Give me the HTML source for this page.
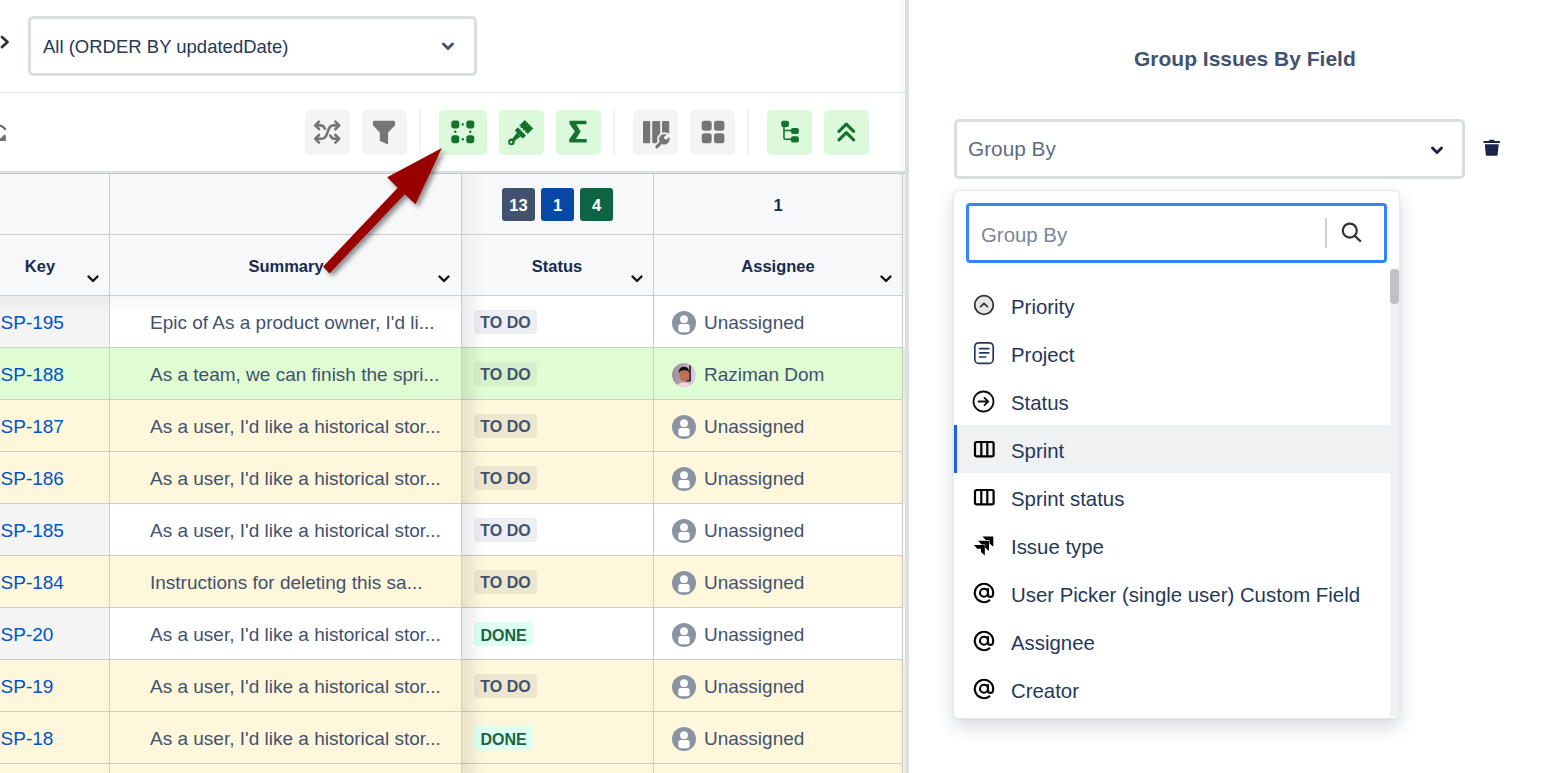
<!DOCTYPE html>
<html><head><meta charset="utf-8"><style>
html,body{margin:0;padding:0;}
body{width:1543px;height:773px;overflow:hidden;position:relative;background:#fff;font-family:"Liberation Sans", sans-serif;}
.a{position:absolute;}
.t{position:absolute;white-space:nowrap;}
.btn{position:absolute;top:110px;height:45px;border-radius:5px;}
.btn svg{position:absolute;}
</style></head><body>

<svg class="a" style="left:0;top:34px" width="12" height="16" viewBox="0 0 12 16"><path d="M2 3 L7.5 8 L2 13" fill="none" stroke="#333" stroke-width="2.8" stroke-linecap="round" stroke-linejoin="round"/></svg>
<div class="a" style="left:28px;top:16px;width:443px;height:54px;border:3px solid #dadde2;border-radius:5px;"></div>
<div class="t" style="left:43px;top:38px;font-size:18.5px;line-height:18.5px;color:#253858;">All (ORDER BY updatedDate)</div>
<svg class="a" style="left:440px;top:40px" width="16" height="13" viewBox="0 0 16 13"><path d="M3.5 4 L8 8.5 L12.5 4" fill="none" stroke="#42526e" stroke-width="3" stroke-linecap="round" stroke-linejoin="round"/></svg>
<div class="a" style="left:0;top:92px;width:905px;height:1px;background:#e4e6ea;"></div>
<svg class="a" style="left:-14px;top:120px" width="22" height="24" viewBox="0 0 22 24"><path d="M4 10 A 9 9 0 0 1 19 9" fill="none" stroke="#6b6b6b" stroke-width="2.2" stroke-linecap="round"/><path d="M19.8 16 V 21 H 13 Z" fill="#6b6b6b"/><path d="M19 15 A 9 9 0 0 1 10 20" fill="none" stroke="#6b6b6b" stroke-width="2.2"/></svg>
<div class="btn" style="left:305px;width:45px;background:#f4f4f4;"><svg style="left:8px;top:10px" width="30" height="26" viewBox="0 0 30 26"><g fill="none" stroke="#757575" stroke-width="2.6" stroke-linecap="round" stroke-linejoin="round">
<path d="M25.5 5.4 H20.5 C17 5.4 15.6 8 14.6 12 C13.6 16 12.2 18.8 8.6 18.8 H3"/>
<path d="M22.3 1.6 L26.2 5.4 L22.3 9.2"/>
<path d="M6 15 L2.2 18.8 L6 22.6"/>
<path d="M3 5.4 H7.6 C9.9 5.4 11 6.6 11.8 8.7"/>
<path d="M6 1.6 L2.2 5.4 L6 9.2"/>
<path d="M17.3 15.5 C18.1 17.6 19.3 18.8 21.6 18.8 H25.5"/>
<path d="M22.3 15 L26.2 18.8 L22.3 22.6"/>
</g></svg></div>
<div class="btn" style="left:362px;width:45px;background:#f4f4f4;"><svg style="left:10px;top:10px" width="25" height="26" viewBox="0 0 25 26"><path d="M0.5 1.5 Q0.5 0.5 1.8 0.5 H21.2 Q22.5 0.5 22.5 1.8 V5 L15.6 12.2 V23 Q15.6 24.3 14.3 23.7 L7.3 20.4 V12.2 L0.5 5 Z" fill="#757575" transform="translate(0.5 0.3)"/></svg></div>
<div class="a" style="left:419px;top:110px;width:2px;height:45px;background:#f0f1f2;"></div>
<div class="btn" style="left:439px;width:48px;background:#dcf9dc;"><svg style="left:12px;top:10px" width="24" height="24" viewBox="0 0 24 24"><g fill="#16732f">
<rect x="0.3" y="0.4" width="8" height="8" rx="2.6"/><rect x="15.3" y="0.4" width="8" height="8" rx="2.6"/>
<rect x="0.3" y="15.2" width="8" height="8" rx="2.6"/><rect x="15.3" y="15.2" width="8" height="8" rx="2.6"/>
<circle cx="11.8" cy="4.4" r="1.2"/><circle cx="11.8" cy="19.2" r="1.2"/><circle cx="4.3" cy="11.8" r="1.2"/><circle cx="19.3" cy="11.8" r="1.2"/>
</g></svg></div>
<div class="btn" style="left:499px;width:45px;background:#dcf9dc;"><svg style="left:0;top:0" width="45" height="45" viewBox="0 0 45 45"><g fill="#16732f" transform="translate(30 14.3) rotate(45)">
<path d="M-6 0 H6 V8.6 L4.6 7 L3.2 8.8 L1.6 6.8 L0 8.9 L-1.6 6.9 L-3.2 8.8 L-4.6 7 L-6 8.6 Z"/>
<path d="M-5.8 10 H5.8 V13.4 Q5.8 14.6 4.6 14.6 H-4.6 Q-5.8 14.6 -5.8 13.4 Z"/>
<path d="M-2.6 14.6 H2.6 L1.6 21.5 Q1.6 22.2 2.4 22.6 A3.3 3.3 0 1 1 -2.4 22.6 Q-1.6 22.2 -1.6 21.5 Z"/>
<circle cx="0" cy="25.2" r="1.1" fill="#dcf9dc"/>
</g></svg></div>
<div class="btn" style="left:556px;width:45px;background:#dcf9dc;"><svg style="left:13px;top:10px" width="20" height="25" viewBox="0 0 20 25"><path d="M0.6 0.8 H17.4 V4.3 H7.2 L11.6 11.5 L7 18.9 H17.7 V22.5 H0.2 V19.3 L5.8 11.5 L0.6 4 Z" fill="#16732f"/></svg></div>
<div class="a" style="left:613px;top:110px;width:2px;height:45px;background:#f0f1f2;"></div>
<div class="btn" style="left:633px;width:45px;background:#f4f4f4;"><svg style="left:0;top:0" width="45" height="45" viewBox="0 0 45 45"><g fill="#757575">
<rect x="10" y="11" width="7.2" height="22.3" rx="1.2"/>
<rect x="19.2" y="11" width="8" height="22.3" rx="1.2"/>
<rect x="29" y="11" width="7.2" height="22.3" rx="1.2"/>
</g>
<g stroke="#f4f4f4" fill="#f4f4f4" stroke-width="3" stroke-linecap="round">
<circle cx="31.3" cy="29.3" r="5.6"/><path d="M28 32.6 L23.6 37" stroke-width="6.2"/>
</g>
<g fill="#757575">
<circle cx="31.3" cy="29.3" r="5.3"/>
</g>
<path d="M28 32.6 L23.8 36.8" stroke="#757575" stroke-width="3.1" stroke-linecap="round"/>
<circle cx="33" cy="27.6" r="1.9" fill="#f4f4f4"/>
<path d="M33 27.6 L36.5 24.1" stroke="#f4f4f4" stroke-width="3.3"/>
</svg></div>
<div class="btn" style="left:690px;width:45px;background:#f4f4f4;"><svg style="left:11px;top:10px" width="24" height="24" viewBox="0 0 24 24"><g fill="#757575">
<rect x="0.7" y="0.8" width="10" height="10" rx="2.8"/><rect x="13" y="0.8" width="10.4" height="10" rx="2.8"/>
<rect x="0.7" y="13.2" width="10" height="10" rx="2.8"/><rect x="13" y="13.2" width="10.4" height="10" rx="2.8"/>
</g></svg></div>
<div class="a" style="left:747px;top:110px;width:2px;height:45px;background:#f0f1f2;"></div>
<div class="btn" style="left:767px;width:45px;background:#dcf9dc;"><svg style="left:13px;top:10px" width="20" height="24" viewBox="0 0 20 24"><g fill="#16732f">
<rect x="1.2" y="0.7" width="7.8" height="6.4" rx="2"/>
<rect x="10.9" y="7.9" width="8" height="6" rx="2"/>
<rect x="10.9" y="16.2" width="8" height="6.4" rx="2"/>
</g><g fill="none" stroke="#16732f" stroke-width="1.6">
<path d="M4 6.5 V18 Q4 19.2 5.2 19.2 H11.5"/><path d="M4 10.5 H11.5"/>
</g></svg></div>
<div class="btn" style="left:824px;width:45px;background:#dcf9dc;"><svg style="left:12px;top:12px" width="21" height="21" viewBox="0 0 21 21"><g fill="none" stroke="#16732f" stroke-width="3.2" stroke-linecap="round" stroke-linejoin="round">
<path d="M3 9.3 L10.3 2.2 L17.6 9.3"/><path d="M3 17.8 L10.3 10.7 L17.6 17.8"/>
</g></svg></div>
<div class="a" style="left:0;top:171px;width:905px;height:3px;background:#dcdfe4;"></div>
<div class="a" style="left:0;top:173px;width:903px;height:1px;background:#c9cacc;"></div>
<div class="a" style="left:0;top:174px;width:905px;height:121px;background:#f7f8fa;"></div>
<div class="a" style="left:0;top:234px;width:903px;height:1px;background:#cdcdcd;"></div>
<div class="a" style="left:0;top:295px;width:903px;height:1px;background:#cdcdcd;"></div>
<div class="a" style="left:502px;top:188px;width:33px;height:33px;border-radius:3px;background:#42526e;color:#fff;font-weight:bold;font-size:16.5px;line-height:35px;text-align:center;">13</div>
<div class="a" style="left:541px;top:188px;width:33px;height:33px;border-radius:3px;background:#0747a6;color:#fff;font-weight:bold;font-size:16.5px;line-height:35px;text-align:center;">1</div>
<div class="a" style="left:580px;top:188px;width:33px;height:33px;border-radius:3px;background:#0e6342;color:#fff;font-weight:bold;font-size:16.5px;line-height:35px;text-align:center;">4</div>
<div class="t" style="left:654px;width:248px;top:197px;font-size:16.5px;line-height:16.5px;font-weight:bold;text-align:center;color:#172b4d;">1</div>
<div class="t" style="left:-60px;width:200px;top:258px;font-size:16.5px;line-height:16.5px;font-weight:bold;text-align:center;color:#172b4d;">Key</div>
<div class="t" style="left:186px;width:200px;top:258px;font-size:16.5px;line-height:16.5px;font-weight:bold;text-align:center;color:#172b4d;">Summary</div>
<div class="t" style="left:457px;width:200px;top:258px;font-size:16.5px;line-height:16.5px;font-weight:bold;text-align:center;color:#172b4d;">Status</div>
<div class="t" style="left:678px;width:200px;top:258px;font-size:16.5px;line-height:16.5px;font-weight:bold;text-align:center;color:#172b4d;">Assignee</div>
<svg class="a" style="left:86px;top:273px" width="14" height="12" viewBox="0 0 14 12"><path d="M2.5 3.5 L7 8 L11.5 3.5" fill="none" stroke="#111" stroke-width="2.4" stroke-linecap="round" stroke-linejoin="round"/></svg>
<svg class="a" style="left:437px;top:273px" width="14" height="12" viewBox="0 0 14 12"><path d="M2.5 3.5 L7 8 L11.5 3.5" fill="none" stroke="#111" stroke-width="2.4" stroke-linecap="round" stroke-linejoin="round"/></svg>
<svg class="a" style="left:630px;top:273px" width="14" height="12" viewBox="0 0 14 12"><path d="M2.5 3.5 L7 8 L11.5 3.5" fill="none" stroke="#111" stroke-width="2.4" stroke-linecap="round" stroke-linejoin="round"/></svg>
<svg class="a" style="left:879px;top:273px" width="14" height="12" viewBox="0 0 14 12"><path d="M2.5 3.5 L7 8 L11.5 3.5" fill="none" stroke="#111" stroke-width="2.4" stroke-linecap="round" stroke-linejoin="round"/></svg>
<div class="a" style="left:0;top:296px;width:905px;height:51px;background:#ffffff;"></div>
<div class="a" style="left:0;top:296px;width:109px;height:51px;background:#f4f4f4;"></div>
<div class="a" style="left:0;top:347px;width:903px;height:1px;background:#cdcdcd;"></div>
<div class="t" style="left:-10px;top:313px;font-size:19px;line-height:19px;color:#0052cc;">LSP-195</div>
<div class="t" style="left:150px;top:313px;font-size:19px;line-height:19px;color:#42526e;">Epic of As a product owner, I'd li...</div>
<div class="a" style="left:474px;top:310px;width:63px;height:24px;border-radius:4px;background:#eceef1;"></div>
<div class="t" style="left:474px;width:63px;text-align:center;top:315px;font-size:16px;line-height:16px;font-weight:bold;color:#42526e;">TO DO</div>
<svg class="a" style="left:672px;top:311px" width="24" height="24" viewBox="0 0 24 24"><defs><clipPath id="c0"><circle cx="12" cy="12" r="12"/></clipPath></defs><circle cx="12" cy="12" r="12" fill="#8993a4"/><g clip-path="url(#c0)" fill="#fff"><circle cx="12" cy="8.2" r="3.9"/><rect x="6.3" y="13.1" width="11.4" height="8.1" rx="2.6"/></g></svg>
<div class="t" style="left:704px;top:313px;font-size:19px;line-height:19px;color:#42526e;">Unassigned</div>
<div class="a" style="left:0;top:348px;width:905px;height:51px;background:#dffcd2;"></div>
<div class="a" style="left:0;top:348px;width:109px;height:51px;background:#dffcd2;"></div>
<div class="a" style="left:0;top:399px;width:903px;height:1px;background:#cdcdcd;"></div>
<div class="t" style="left:-10px;top:365px;font-size:19px;line-height:19px;color:#0052cc;">LSP-188</div>
<div class="t" style="left:150px;top:365px;font-size:19px;line-height:19px;color:#42526e;">As a team, we can finish the spri...</div>
<div class="a" style="left:474px;top:362px;width:63px;height:24px;border-radius:4px;background:#d6f0cc;"></div>
<div class="t" style="left:474px;width:63px;text-align:center;top:367px;font-size:16px;line-height:16px;font-weight:bold;color:#42526e;">TO DO</div>
<svg class="a" style="left:672px;top:363px" width="24" height="24" viewBox="0 0 24 24"><defs><clipPath id="rz"><circle cx="12" cy="12" r="11.9"/></clipPath><linearGradient id="rzg" x1="0" y1="0" x2="1" y2="0"><stop offset="0" stop-color="#a08e9c"/><stop offset="0.55" stop-color="#b8a8b8"/><stop offset="1" stop-color="#dcd6e6"/></linearGradient></defs><g clip-path="url(#rz)"><rect width="24" height="24" fill="url(#rzg)"/><path d="M18 2.5 V17.5 H13" fill="none" stroke="#3a2824" stroke-width="1.8"/><ellipse cx="12.2" cy="12.6" rx="4.9" ry="6" fill="#bd7052"/><path d="M6.8 10.5 Q6.3 3.6 12 3.8 Q17.6 3.6 17.2 10.5 Q16.3 7 12.2 7.2 Q8 7 6.8 10.5 Z" fill="#171010"/><path d="M4.5 24 Q5.5 19.6 12 19.4 Q18.5 19.6 19.5 24 Z" fill="#eed4da"/></g></svg>
<div class="t" style="left:704px;top:365px;font-size:19px;line-height:19px;color:#42526e;">Raziman Dom</div>
<div class="a" style="left:0;top:400px;width:905px;height:51px;background:#fef7dc;"></div>
<div class="a" style="left:0;top:400px;width:109px;height:51px;background:#fef7dc;"></div>
<div class="a" style="left:0;top:451px;width:903px;height:1px;background:#cdcdcd;"></div>
<div class="t" style="left:-10px;top:417px;font-size:19px;line-height:19px;color:#0052cc;">LSP-187</div>
<div class="t" style="left:150px;top:417px;font-size:19px;line-height:19px;color:#42526e;">As a user, I'd like a historical stor...</div>
<div class="a" style="left:474px;top:414px;width:63px;height:24px;border-radius:4px;background:#ede7d0;"></div>
<div class="t" style="left:474px;width:63px;text-align:center;top:419px;font-size:16px;line-height:16px;font-weight:bold;color:#42526e;">TO DO</div>
<svg class="a" style="left:672px;top:415px" width="24" height="24" viewBox="0 0 24 24"><defs><clipPath id="c2"><circle cx="12" cy="12" r="12"/></clipPath></defs><circle cx="12" cy="12" r="12" fill="#8993a4"/><g clip-path="url(#c2)" fill="#fff"><circle cx="12" cy="8.2" r="3.9"/><rect x="6.3" y="13.1" width="11.4" height="8.1" rx="2.6"/></g></svg>
<div class="t" style="left:704px;top:417px;font-size:19px;line-height:19px;color:#42526e;">Unassigned</div>
<div class="a" style="left:0;top:452px;width:905px;height:51px;background:#fef7dc;"></div>
<div class="a" style="left:0;top:452px;width:109px;height:51px;background:#fef7dc;"></div>
<div class="a" style="left:0;top:503px;width:903px;height:1px;background:#cdcdcd;"></div>
<div class="t" style="left:-10px;top:469px;font-size:19px;line-height:19px;color:#0052cc;">LSP-186</div>
<div class="t" style="left:150px;top:469px;font-size:19px;line-height:19px;color:#42526e;">As a user, I'd like a historical stor...</div>
<div class="a" style="left:474px;top:466px;width:63px;height:24px;border-radius:4px;background:#ede7d0;"></div>
<div class="t" style="left:474px;width:63px;text-align:center;top:471px;font-size:16px;line-height:16px;font-weight:bold;color:#42526e;">TO DO</div>
<svg class="a" style="left:672px;top:467px" width="24" height="24" viewBox="0 0 24 24"><defs><clipPath id="c3"><circle cx="12" cy="12" r="12"/></clipPath></defs><circle cx="12" cy="12" r="12" fill="#8993a4"/><g clip-path="url(#c3)" fill="#fff"><circle cx="12" cy="8.2" r="3.9"/><rect x="6.3" y="13.1" width="11.4" height="8.1" rx="2.6"/></g></svg>
<div class="t" style="left:704px;top:469px;font-size:19px;line-height:19px;color:#42526e;">Unassigned</div>
<div class="a" style="left:0;top:504px;width:905px;height:51px;background:#ffffff;"></div>
<div class="a" style="left:0;top:504px;width:109px;height:51px;background:#f4f4f4;"></div>
<div class="a" style="left:0;top:555px;width:903px;height:1px;background:#cdcdcd;"></div>
<div class="t" style="left:-10px;top:521px;font-size:19px;line-height:19px;color:#0052cc;">LSP-185</div>
<div class="t" style="left:150px;top:521px;font-size:19px;line-height:19px;color:#42526e;">As a user, I'd like a historical stor...</div>
<div class="a" style="left:474px;top:518px;width:63px;height:24px;border-radius:4px;background:#eceef1;"></div>
<div class="t" style="left:474px;width:63px;text-align:center;top:523px;font-size:16px;line-height:16px;font-weight:bold;color:#42526e;">TO DO</div>
<svg class="a" style="left:672px;top:519px" width="24" height="24" viewBox="0 0 24 24"><defs><clipPath id="c4"><circle cx="12" cy="12" r="12"/></clipPath></defs><circle cx="12" cy="12" r="12" fill="#8993a4"/><g clip-path="url(#c4)" fill="#fff"><circle cx="12" cy="8.2" r="3.9"/><rect x="6.3" y="13.1" width="11.4" height="8.1" rx="2.6"/></g></svg>
<div class="t" style="left:704px;top:521px;font-size:19px;line-height:19px;color:#42526e;">Unassigned</div>
<div class="a" style="left:0;top:556px;width:905px;height:51px;background:#fef7dc;"></div>
<div class="a" style="left:0;top:556px;width:109px;height:51px;background:#fef7dc;"></div>
<div class="a" style="left:0;top:607px;width:903px;height:1px;background:#cdcdcd;"></div>
<div class="t" style="left:-10px;top:573px;font-size:19px;line-height:19px;color:#0052cc;">LSP-184</div>
<div class="t" style="left:150px;top:573px;font-size:19px;line-height:19px;color:#42526e;">Instructions for deleting this sa...</div>
<div class="a" style="left:474px;top:570px;width:63px;height:24px;border-radius:4px;background:#ede7d0;"></div>
<div class="t" style="left:474px;width:63px;text-align:center;top:575px;font-size:16px;line-height:16px;font-weight:bold;color:#42526e;">TO DO</div>
<svg class="a" style="left:672px;top:571px" width="24" height="24" viewBox="0 0 24 24"><defs><clipPath id="c5"><circle cx="12" cy="12" r="12"/></clipPath></defs><circle cx="12" cy="12" r="12" fill="#8993a4"/><g clip-path="url(#c5)" fill="#fff"><circle cx="12" cy="8.2" r="3.9"/><rect x="6.3" y="13.1" width="11.4" height="8.1" rx="2.6"/></g></svg>
<div class="t" style="left:704px;top:573px;font-size:19px;line-height:19px;color:#42526e;">Unassigned</div>
<div class="a" style="left:0;top:608px;width:905px;height:51px;background:#ffffff;"></div>
<div class="a" style="left:0;top:608px;width:109px;height:51px;background:#f4f4f4;"></div>
<div class="a" style="left:0;top:659px;width:903px;height:1px;background:#cdcdcd;"></div>
<div class="t" style="left:-10px;top:625px;font-size:19px;line-height:19px;color:#0052cc;">LSP-20</div>
<div class="t" style="left:150px;top:625px;font-size:19px;line-height:19px;color:#42526e;">As a user, I'd like a historical stor...</div>
<div class="a" style="left:474px;top:622px;width:59px;height:24px;border-radius:4px;background:#dcfff1;"></div>
<div class="t" style="left:474px;width:59px;text-align:center;top:628px;font-size:16px;line-height:16px;font-weight:bold;color:#1c6342;">DONE</div>
<svg class="a" style="left:672px;top:623px" width="24" height="24" viewBox="0 0 24 24"><defs><clipPath id="c6"><circle cx="12" cy="12" r="12"/></clipPath></defs><circle cx="12" cy="12" r="12" fill="#8993a4"/><g clip-path="url(#c6)" fill="#fff"><circle cx="12" cy="8.2" r="3.9"/><rect x="6.3" y="13.1" width="11.4" height="8.1" rx="2.6"/></g></svg>
<div class="t" style="left:704px;top:625px;font-size:19px;line-height:19px;color:#42526e;">Unassigned</div>
<div class="a" style="left:0;top:660px;width:905px;height:51px;background:#fef7dc;"></div>
<div class="a" style="left:0;top:660px;width:109px;height:51px;background:#fef7dc;"></div>
<div class="a" style="left:0;top:711px;width:903px;height:1px;background:#cdcdcd;"></div>
<div class="t" style="left:-10px;top:677px;font-size:19px;line-height:19px;color:#0052cc;">LSP-19</div>
<div class="t" style="left:150px;top:677px;font-size:19px;line-height:19px;color:#42526e;">As a user, I'd like a historical stor...</div>
<div class="a" style="left:474px;top:674px;width:63px;height:24px;border-radius:4px;background:#ede7d0;"></div>
<div class="t" style="left:474px;width:63px;text-align:center;top:679px;font-size:16px;line-height:16px;font-weight:bold;color:#42526e;">TO DO</div>
<svg class="a" style="left:672px;top:675px" width="24" height="24" viewBox="0 0 24 24"><defs><clipPath id="c7"><circle cx="12" cy="12" r="12"/></clipPath></defs><circle cx="12" cy="12" r="12" fill="#8993a4"/><g clip-path="url(#c7)" fill="#fff"><circle cx="12" cy="8.2" r="3.9"/><rect x="6.3" y="13.1" width="11.4" height="8.1" rx="2.6"/></g></svg>
<div class="t" style="left:704px;top:677px;font-size:19px;line-height:19px;color:#42526e;">Unassigned</div>
<div class="a" style="left:0;top:712px;width:905px;height:51px;background:#fef7dc;"></div>
<div class="a" style="left:0;top:712px;width:109px;height:51px;background:#fef7dc;"></div>
<div class="a" style="left:0;top:763px;width:903px;height:1px;background:#cdcdcd;"></div>
<div class="t" style="left:-10px;top:729px;font-size:19px;line-height:19px;color:#0052cc;">LSP-18</div>
<div class="t" style="left:150px;top:729px;font-size:19px;line-height:19px;color:#42526e;">As a user, I'd like a historical stor...</div>
<div class="a" style="left:474px;top:726px;width:59px;height:24px;border-radius:4px;background:#dcfff1;"></div>
<div class="t" style="left:474px;width:59px;text-align:center;top:732px;font-size:16px;line-height:16px;font-weight:bold;color:#1c6342;">DONE</div>
<svg class="a" style="left:672px;top:727px" width="24" height="24" viewBox="0 0 24 24"><defs><clipPath id="c8"><circle cx="12" cy="12" r="12"/></clipPath></defs><circle cx="12" cy="12" r="12" fill="#8993a4"/><g clip-path="url(#c8)" fill="#fff"><circle cx="12" cy="8.2" r="3.9"/><rect x="6.3" y="13.1" width="11.4" height="8.1" rx="2.6"/></g></svg>
<div class="t" style="left:704px;top:729px;font-size:19px;line-height:19px;color:#42526e;">Unassigned</div>
<div class="a" style="left:0;top:764px;width:905px;height:51px;background:#fef7dc;"></div>
<div class="a" style="left:0;top:764px;width:109px;height:51px;background:#fef7dc;"></div>
<div class="a" style="left:0;top:815px;width:903px;height:1px;background:#cdcdcd;"></div>
<div class="t" style="left:-10px;top:781px;font-size:19px;line-height:19px;color:#0052cc;">LSP-17</div>
<div class="t" style="left:150px;top:781px;font-size:19px;line-height:19px;color:#42526e;">As a user, I'd like a historical stor...</div>
<div class="a" style="left:474px;top:778px;width:63px;height:24px;border-radius:4px;background:#ede7d0;"></div>
<div class="t" style="left:474px;width:63px;text-align:center;top:783px;font-size:16px;line-height:16px;font-weight:bold;color:#42526e;">TO DO</div>
<svg class="a" style="left:672px;top:779px" width="24" height="24" viewBox="0 0 24 24"><defs><clipPath id="c9"><circle cx="12" cy="12" r="12"/></clipPath></defs><circle cx="12" cy="12" r="12" fill="#8993a4"/><g clip-path="url(#c9)" fill="#fff"><circle cx="12" cy="8.2" r="3.9"/><rect x="6.3" y="13.1" width="11.4" height="8.1" rx="2.6"/></g></svg>
<div class="t" style="left:704px;top:781px;font-size:19px;line-height:19px;color:#42526e;">Unassigned</div>
<div class="a" style="left:109px;top:174px;width:1px;height:599px;background:#cdcdcd;"></div>
<div class="a" style="left:461px;top:174px;width:1px;height:599px;background:#cdcdcd;"></div>
<div class="a" style="left:653px;top:174px;width:1px;height:599px;background:#cdcdcd;"></div>
<div class="a" style="left:902px;top:174px;width:1px;height:599px;background:#cdcdcd;"></div>
<div class="a" style="left:462px;top:296px;width:22px;height:477px;background:linear-gradient(to right, rgba(0,0,0,0.09), rgba(0,0,0,0));"></div>
<div class="a" style="left:462px;top:174px;width:22px;height:121px;background:linear-gradient(to right, rgba(0,0,0,0.04), rgba(0,0,0,0));"></div>
<div class="a" style="left:0;top:296px;width:461px;height:18px;background:linear-gradient(to bottom, rgba(0,0,0,0.035), rgba(0,0,0,0));"></div>
<div class="a" style="left:897px;top:0;width:8px;height:773px;background:linear-gradient(to right, rgba(0,0,0,0), rgba(0,0,0,0.03));"></div>
<div class="a" style="left:905px;top:0;width:4px;height:773px;background:#dcdfe4;"></div>
<svg class="a" style="left:0;top:0;pointer-events:none" width="1543" height="773" viewBox="0 0 1543 773">
<defs><filter id="sh" x="-20%" y="-20%" width="140%" height="140%"><feGaussianBlur in="SourceAlpha" stdDeviation="2.6"/><feOffset dx="3" dy="3" result="b"/><feComponentTransfer><feFuncA type="linear" slope="0.45"/></feComponentTransfer><feMerge><feMergeNode/><feMergeNode in="SourceGraphic"/></feMerge></filter></defs>
<path d="M441.9 148.1 L415.5 204.2 L404.7 194.3 L329.5 273.4 L323 266.7 L397.7 187.8 L387.1 177.3 Z" fill="#990000" filter="url(#sh)"/>
</svg>
<div class="t" style="left:1134px;top:48px;font-size:21px;line-height:21px;font-weight:bold;color:#42526e;">Group Issues By Field</div>
<div class="a" style="left:954px;top:119px;width:505px;height:54px;border:3px solid #dadde2;border-radius:5px;"></div>
<div class="t" style="left:968px;top:139px;font-size:20.8px;line-height:20.8px;color:#5e6c84;">Group By</div>
<svg class="a" style="left:1429px;top:142.8px" width="16" height="14" viewBox="0 0 16 14"><path d="M3.5 5 L8 9.5 L12.5 5" fill="none" stroke="#1d2649" stroke-width="3" stroke-linecap="round" stroke-linejoin="round"/></svg>
<svg class="a" style="left:1483px;top:138.5px" width="18" height="18" viewBox="0 0 18 18"><g fill="#1c2549"><path d="M6.5 0.8 H11 L11.6 2 H16.5 Q17 2 17 2.5 V4 H0.5 V2.5 Q0.5 2 1 2 H5.9 Z"/><path d="M1.8 5.2 H15.7 L14.7 15.6 Q14.6 16.8 13.4 16.8 H4.1 Q2.9 16.8 2.8 15.6 Z"/></g></svg>
<div class="a" style="left:953px;top:190px;width:445px;height:527px;border:1px solid #e6e8ec;border-radius:6px;background:#fff;box-shadow:0 8px 18px rgba(9,30,66,0.16), 0 0 3px rgba(9,30,66,0.06);"></div>
<div class="a" style="left:966px;top:203px;width:415px;height:54px;border:3px solid #3385fb;border-radius:4px;background:#fff;"></div>
<div class="t" style="left:981px;top:224.5px;font-size:20.4px;line-height:20.4px;color:#7a869a;">Group By</div>
<div class="a" style="left:1325px;top:218px;width:2px;height:30px;background:#cfd1d4;"></div>
<svg class="a" style="left:1340px;top:221px" width="23" height="23" viewBox="0 0 23 23"><circle cx="9.8" cy="9.6" r="7" fill="none" stroke="#333" stroke-width="2.2"/><path d="M14.8 14.8 L20.2 20" stroke="#333" stroke-width="2.4" stroke-linecap="round"/></svg>
<div class="a" style="left:1390px;top:269px;width:9px;height:448px;background:#f1f1f1;"></div>
<div class="a" style="left:1390px;top:269px;width:9px;height:35px;background:#c1c1c1;border-radius:4px;"></div>
<div class="a" style="left:955px;top:425px;width:435px;height:48px;background:#f0f1f3;"></div>
<div class="a" style="left:954px;top:425px;width:3px;height:48px;background:#1d5fe0;"></div>
<svg class="a" style="left:973px;top:294px" width="22" height="22" viewBox="0 0 22 22"><circle cx="11" cy="11" r="9.3" fill="#e6e6e6" stroke="#333" stroke-width="1.8"/><path d="M7.6 12.6 L11 9.4 L14.4 12.6" fill="none" stroke="#333" stroke-width="1.8" stroke-linecap="round" stroke-linejoin="round"/></svg>
<div class="t" style="left:1011px;top:296.8px;font-size:20.4px;line-height:20.4px;color:#253858;">Priority</div>
<svg class="a" style="left:973px;top:341px" width="22" height="24" viewBox="0 0 22 24"><rect x="1.8" y="1.8" width="18.4" height="20.6" rx="4" fill="none" stroke="#253858" stroke-width="1.7"/><path d="M6.6 7.6 H15.8 M6.6 11.8 H15.8 M6.6 16 H12.6" stroke="#253858" stroke-width="1.7" stroke-linecap="round"/></svg>
<div class="t" style="left:1011px;top:344.8px;font-size:20.4px;line-height:20.4px;color:#253858;">Project</div>
<svg class="a" style="left:972px;top:390px" width="24" height="24" viewBox="0 0 24 24"><circle cx="11.5" cy="11.5" r="10" fill="none" stroke="#111" stroke-width="1.8"/><path d="M6.5 11.5 H16 M12.5 7.8 L16.2 11.5 L12.5 15.2" fill="none" stroke="#111" stroke-width="1.8" stroke-linecap="round" stroke-linejoin="round"/></svg>
<div class="t" style="left:1011px;top:392.8px;font-size:20.4px;line-height:20.4px;color:#253858;">Status</div>
<svg class="a" style="left:973px;top:440px" width="22" height="18" viewBox="0 0 22 18"><rect x="2" y="2" width="18.6" height="14.4" rx="1.6" fill="none" stroke="#000" stroke-width="2.2"/><path d="M8.3 2 V16.4 M14.3 2 V16.4" stroke="#000" stroke-width="2.2"/></svg>
<div class="t" style="left:1011px;top:440.8px;font-size:20.4px;line-height:20.4px;color:#253858;">Sprint</div>
<svg class="a" style="left:973px;top:488px" width="22" height="18" viewBox="0 0 22 18"><rect x="2" y="2" width="18.6" height="14.4" rx="1.6" fill="none" stroke="#000" stroke-width="2.2"/><path d="M8.3 2 V16.4 M14.3 2 V16.4" stroke="#000" stroke-width="2.2"/></svg>
<div class="t" style="left:1011px;top:488.8px;font-size:20.4px;line-height:20.4px;color:#253858;">Sprint status</div>
<svg class="a" style="left:973px;top:535px" width="22" height="22" viewBox="0 0 22 22"><g fill="#000"><path transform="translate(0 0)" d="M9.4 1.4 H20.3 V11.8 L16.5 8.4 V5.6 Q16.5 5.1 16 5.1 H12.8 Z"/><path transform="translate(-4.3 4.3)" d="M9.4 1.4 H20.3 V11.8 L16.5 8.4 V5.6 Q16.5 5.1 16 5.1 H12.8 Z"/><path transform="translate(-8.5 8.6)" d="M9.4 1.4 H20.3 V11.8 L16.5 8.4 V5.6 Q16.5 5.1 16 5.1 H12.8 Z"/></g></svg>
<div class="t" style="left:1011px;top:536.8px;font-size:20.4px;line-height:20.4px;color:#253858;">Issue type</div>
<svg class="a" style="left:972px;top:581px" width="24" height="24" viewBox="0 0 24 24"><g fill="none" stroke="#000" stroke-width="2.1" stroke-linecap="round"><circle cx="12" cy="11.8" r="4"/><path d="M16 8 V13.2 Q16 16 18.6 16 Q21.2 16 21.2 12 A9.2 9.2 0 1 0 17.4 19.4"/></g></svg>
<div class="t" style="left:1011px;top:584.8px;font-size:20.4px;line-height:20.4px;color:#253858;">User Picker (single user) Custom Field</div>
<svg class="a" style="left:972px;top:629px" width="24" height="24" viewBox="0 0 24 24"><g fill="none" stroke="#000" stroke-width="2.1" stroke-linecap="round"><circle cx="12" cy="11.8" r="4"/><path d="M16 8 V13.2 Q16 16 18.6 16 Q21.2 16 21.2 12 A9.2 9.2 0 1 0 17.4 19.4"/></g></svg>
<div class="t" style="left:1011px;top:632.8px;font-size:20.4px;line-height:20.4px;color:#253858;">Assignee</div>
<svg class="a" style="left:972px;top:677px" width="24" height="24" viewBox="0 0 24 24"><g fill="none" stroke="#000" stroke-width="2.1" stroke-linecap="round"><circle cx="12" cy="11.8" r="4"/><path d="M16 8 V13.2 Q16 16 18.6 16 Q21.2 16 21.2 12 A9.2 9.2 0 1 0 17.4 19.4"/></g></svg>
<div class="t" style="left:1011px;top:680.8px;font-size:20.4px;line-height:20.4px;color:#253858;">Creator</div>
</body></html>
